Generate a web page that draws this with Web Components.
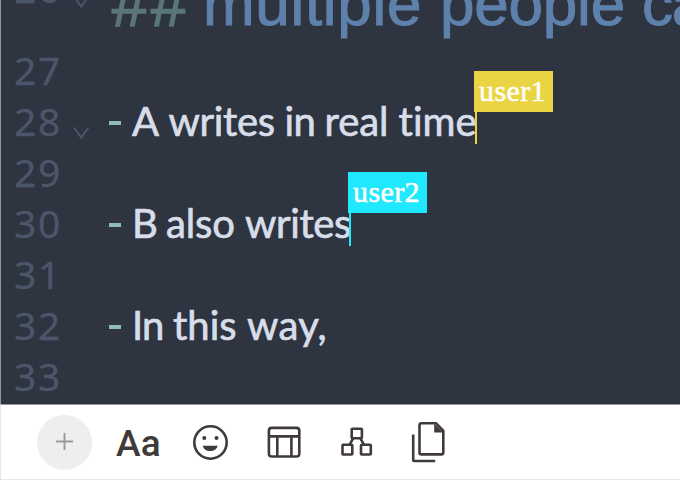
<!DOCTYPE html>
<html lang="en">
<head>
<meta charset="utf-8">
<title>Shared editor</title>
<style>
html, body { margin: 0; width: 680px; height: 480px; overflow: hidden; background: #fff; }
</style>
</head>
<body>
<shared-editor></shared-editor>
<script>
const define = (name, html, setup) => customElements.define(name, class extends HTMLElement {
  connectedCallback() {
    if (this.shadowRoot) return;
    this.attachShadow({ mode: 'open' }).innerHTML = html;
    if (setup) setup(this, this.shadowRoot);
  }
});

// Text run: each word, with its trailing space, is tracked to the advance listed in "widths".
define('text-run', `<style>:host{display:inline-block;white-space:pre}span{display:inline-block}</style>`, (el, root) => {
  const widths = el.getAttribute('widths').split(' ').map(Number);
  const text = el.getAttribute('text');
  const words = widths.length > 1 ? text.match(/\S+\s*/g) : [text];
  words.forEach((word, i) => {
    const s = document.createElement('span');
    s.textContent = word;
    root.append(s);
    const gap = (widths[i] - s.getBoundingClientRect().width) / word.length;
    s.style.letterSpacing = gap.toFixed(3) + 'px';
  });
});

define('user-caret', `<style>
:host{position:absolute;display:block;width:79px;height:73px;z-index:2}
.flag{box-sizing:border-box;height:41px;background:var(--c);padding-left:5px;color:#fffffa;font:30px/39px "Liberation Serif",serif;-webkit-text-stroke:.5px #fffffa}
.bar{width:2px;height:var(--bar,32px);background:var(--c);margin-left:1px}
</style><div class="flag"></div><div class="bar"></div>`, (el, root) => {
  const t = document.createElement('text-run');
  t.setAttribute('widths', '67');
  t.setAttribute('text', el.getAttribute('name'));
  root.querySelector('.flag').append(t);
});

define('code-line', `<style>
:host{display:grid;grid-template-columns:73px 35px 1fr;height:51px;position:relative;font:400 40px/55px Lato,sans-serif;color:#d8dee9;white-space:nowrap}
.no{color:#4c566a;padding-left:14px;box-sizing:border-box;font:39px/53px "Noto Sans",sans-serif;-webkit-text-stroke:.3px}
.fold svg{display:block;margin-top:32px}
:host([head]) .fold svg{margin-top:34px}
.body{display:flex;-webkit-text-stroke:.7px}
</style><div class="no"></div><div class="fold"></div><div class="body"><slot></slot></div>`, (el, root) => {
  const n = document.createElement('text-run');
  n.setAttribute('text', el.getAttribute('no'));
  n.setAttribute('widths', '48');
  root.querySelector('.no').append(n);
  if (el.hasAttribute('fold')) root.querySelector('.fold').innerHTML =
    '<svg width="17" height="14" fill="none" stroke="#4c566a" stroke-width="2"><path d="M1 1.5 8.2 11.5 15.5 1.5"/></svg>';
});

define('list-mark', `<style>:host{display:block;width:12px;height:4px;background:#8fbcbb;margin:27px 11px 0 1px}</style>`);

define('heading-text', `<style>
:host{display:flex;font:400 62px/60px "Liberation Sans",sans-serif;-webkit-text-stroke:1px;color:#5e81ac;margin-top:13px}
.hash{color:#5a7677;font:italic 64px/60px "Liberation Sans",sans-serif;-webkit-text-stroke:1.5px;padding-left:3px;width:92px}
</style><span class="hash"><text-run text="##" widths="78"></text-run></span><text-run text="multiple people ca" widths="237 202 63"></text-run>`);

define('tool-bar', `<style>
:host{box-sizing:border-box;display:flex;align-items:center;height:76px;background:#fff;border-top:1px solid #92969d;border-bottom:1px solid #e7e7e7;border-left:1px solid #e7e7e7;padding-left:36px;color:#403b39}
svg{display:block;fill:none;stroke:currentColor;stroke-width:2.6}
.add{width:55px;height:55px;border-radius:50%;background:#efeeed;display:grid;place-items:center;color:#999;margin-right:24px}
.aa{font:500 37px/50px Roboto,sans-serif;width:76px;padding-top:3px}
</style>
<div class="add"><svg width="19" height="19" style="stroke-width:1.9;margin-top:-2px"><path d="M9.5 1v17M1 9.5h17"/></svg></div>
<div class="aa"><text-run text="Aa" widths="45"></text-run></div>
<svg width="37" height="37" viewBox="0 0 37 37"><circle cx="18.5" cy="18.5" r="16.2"/><g fill="currentColor" stroke="none"><circle cx="12.3" cy="14" r="2"/><circle cx="24.5" cy="14" r="2"/><path d="M10.8 21.8h14.8c-.7 3.5-3.7 5.3-7.4 5.3s-6.7-1.8-7.4-5.3z"/></g></svg>
<svg width="35" height="33" viewBox="0 0 35 33" style="margin-left:38px"><rect x="1.9" y="1.9" width="30.4" height="28.6" rx="2.8"/><path d="M2 10.4h30M10.3 10.4v20M24.4 10.4v20"/></svg>
<svg width="34" height="32" viewBox="0 0 34 32" style="margin-left:37.5px"><rect x="11.7" y="2.7" width="10.2" height="9.5" rx=".8"/><rect x="2.5" y="18.8" width="9.8" height="9.7" rx=".8"/><rect x="21" y="18.8" width="9.8" height="9.7" rx=".8"/><path d="M13.3 12.2 9.5 18.8M20.3 12.2 24 18.8"/></svg>
<svg width="36" height="43" viewBox="0 0 36 43" style="margin-left:36.5px"><path d="M11.5 2.3h14.5l7.3 7.5v21.6c0 1.2-.8 2-2 2h-19.8c-1.3 0-2-.8-2-2V4.3c0-1.2.7-2 2-2z"/><path d="M24.2 2.5v9h9z" fill="currentColor" stroke="none"/><path d="M3.2 13.5v25.3q0 1.2 1.2 1.2h20.8"/></svg>`);

define('shared-editor', `<style>
:host{display:flex;flex-direction:column;width:680px;height:480px;overflow:hidden}
.code{box-sizing:border-box;height:404px;flex:none;background:#2e3440;border-left:1px solid #92969d;overflow:hidden;position:relative}
.lines{margin:-39px 0 0 -1px}
</style>
<div class="code"><div class="lines">
<code-line no="26" head fold style="height:82px"><heading-text></heading-text></code-line>
<code-line no="27"></code-line>
<code-line no="28" fold><list-mark></list-mark><text-run text="A writes in real time" widths="36.5 116 40 74 79"></text-run></code-line>
<code-line no="29"></code-line>
<code-line no="30"><list-mark></list-mark><text-run text="B also writes" widths="34 79 106"></text-run></code-line>
<code-line no="31"></code-line>
<code-line no="32"><list-mark></list-mark><text-run text="In this way," widths="41 74 80"></text-run></code-line>
<code-line no="33"></code-line>
</div>
<user-caret name="user1" style="--c:#ebd444;left:473px;top:71px"></user-caret>
<user-caret name="user2" style="--c:#20e8ff;--bar:33px;left:347px;top:172px"></user-caret>
</div>
<tool-bar></tool-bar>`);
</script>
</body>
</html>
